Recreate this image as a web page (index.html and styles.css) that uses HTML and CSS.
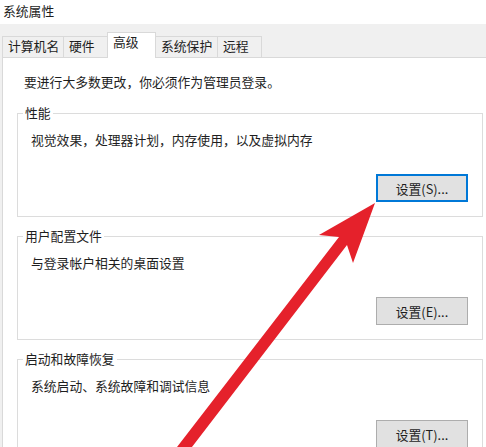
FILE: index.html
```html
<!DOCTYPE html>
<html lang="zh-CN">
<head>
<meta charset="utf-8">
<title>系统属性</title>
<link rel="stylesheet" href="styles.css">
</head>
<body>
<div class="window">
  <div class="titlebar">系统属性</div>
  <div class="dialog">
    <div class="tabs">
      <div class="tab w1">计算机名</div>
      <div class="tab w2">硬件</div>
      <div class="tab active">高级</div>
      <div class="tab w4">系统保护</div>
      <div class="tab w5">远程</div>
    </div>
    <div class="panel">
      <p class="note">要进行大多数更改，你必须作为管理员登录。</p>
      <fieldset class="group">
        <legend>性能</legend>
        <p class="desc">视觉效果，处理器计划，内存使用，以及虚拟内存</p>
        <div class="actions"><button class="btn default">设置(S)...</button></div>
      </fieldset>
      <fieldset class="group">
        <legend>用户配置文件</legend>
        <p class="desc">与登录帐户相关的桌面设置</p>
        <div class="actions"><button class="btn">设置(E)...</button></div>
      </fieldset>
      <fieldset class="group">
        <legend>启动和故障恢复</legend>
        <p class="desc">系统启动、系统故障和调试信息</p>
        <div class="actions"><button class="btn">设置(T)...</button></div>
      </fieldset>
    </div>
  </div>
  <svg class="arrow" width="486" height="447" viewBox="0 0 486 447" aria-hidden="true">
    <polygon points="167,460 339,237 319,235 375,203 353,263 347,245 182,460" fill="#e5212b"/>
  </svg>
</div>
</body>
</html>
```

FILE: styles.css
```css
html, body {
  margin: 0;
  padding: 0;
  background: #ffffff;
}

body {
  font-family: "Noto Sans CJK SC", "Noto Sans", sans-serif;
  font-size: 12.8px;
  color: #1e1e1e;
}

.window {
  position: relative;
  width: 486px;
  height: 447px;
  overflow: hidden;
  background: #ffffff;
}

.titlebar {
  height: 24px;
  line-height: 22px;
  padding-left: 3px;
  background: #ffffff;
}

.dialog {
  background: #f0f0f0;
  padding-left: 2px;
}

.tabs {
  display: flex;
  align-items: flex-end;
  height: 33px;
}

.tab {
  box-sizing: border-box;
  height: 21px;
  padding: 1px 0 0 5px;
  line-height: 16px;
  border: 1px solid #d9d9d9;
  border-bottom: none;
  background: #f0f0f0;
  white-space: nowrap;
  margin-right: -1px;
}

.w1 { width: 62px; }
.w2 { width: 45px; }
.w4 { width: 63px; }
.w5 { width: 45px; }

.tab.active {
  position: relative;
  z-index: 1;
  width: 49px;
  height: 26px;
  margin-bottom: -1px;
  background: #ffffff;
}

.panel {
  background: #ffffff;
  border-top: 1px solid #d9d9d9;
  border-left: 1px solid #d9d9d9;
  padding-top: 16px;
  height: 400px;
}

.note {
  margin: 0 0 15px 21px;
  line-height: 16px;
}

.group {
  box-sizing: border-box;
  width: 466px;
  margin: 0 0 11px 14px;
  padding: 0 14px 14px 0;
  border: 1px solid #dcdcdc;
  min-inline-size: 0;
}

.group legend {
  margin-left: 5px;
  padding: 0 2px;
  line-height: 16px;
}

.desc {
  margin: 11px 0 0 13px;
  line-height: 16px;
}

.actions {
  display: flex;
  justify-content: flex-end;
  margin-top: 26px;
}

.btn {
  box-sizing: border-box;
  width: 92px;
  height: 28px;
  padding: 0;
  font: inherit;
  color: #1e1e1e;
  background: #e1e1e1;
  border: 1px solid #adadad;
  border-radius: 0;
}

.btn.default {
  border: 2px solid #0078d7;
}

.arrow {
  position: absolute;
  left: 0;
  top: 0;
}
```
